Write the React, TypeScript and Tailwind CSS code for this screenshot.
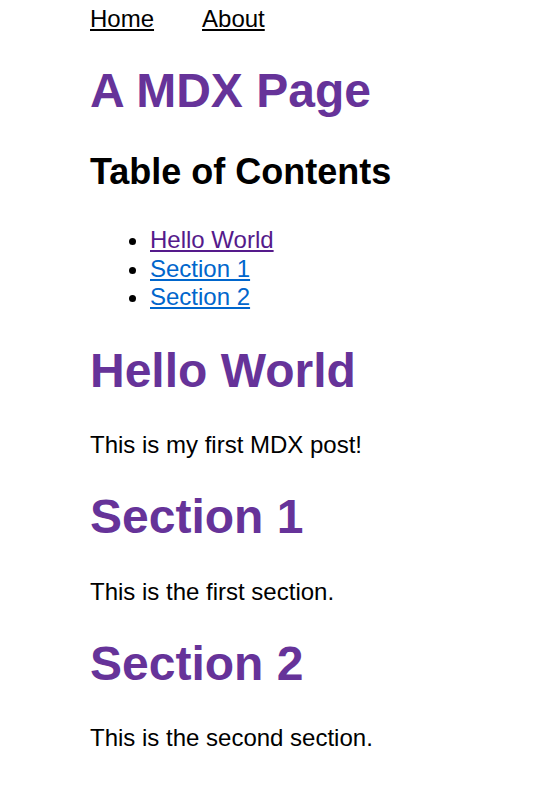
const sections = [
  { id: 'hello-world', title: 'Hello World', body: 'This is my first MDX post!', visited: true },
  { id: 'section-1', title: 'Section 1', body: 'This is the first section.', visited: false },
  { id: 'section-2', title: 'Section 2', body: 'This is the second section.', visited: false },
];

export default function App() {
  return (
    <div className="min-h-screen bg-white pl-[90px] pr-4 pt-[5px] text-[24px] leading-[1.15] text-black [font-family:'Liberation_Sans',Arial,sans-serif]">
      <nav className="flex gap-12">
        <a href="#" className="underline">Home</a>
        <a href="#" className="underline">About</a>
      </nav>

      <main>
        <h1 className="mt-[30px] mb-[33px] text-[48px] font-bold text-[#663399]">A MDX Page</h1>

        <h2 className="mb-[34px] text-[36px] font-bold">Table of Contents</h2>
        <ul className="list-disc pl-[60px]">
          {sections.map((s) => (
            <li key={s.id} className="leading-[28.5px]">
              <a
                href={'#' + s.id}
                className={s.visited ? 'text-[#551a8b] underline' : 'text-[#0066cc] underline'}
              >
                {s.title}
              </a>
            </li>
          ))}
        </ul>

        {sections.map((s) => (
          <section key={s.id}>
            <h1 className="mt-[31px] mb-[33px] text-[48px] font-bold text-[#663399]">{s.title}</h1>
            <p>{s.body}</p>
          </section>
        ))}
      </main>
    </div>
  );
}
